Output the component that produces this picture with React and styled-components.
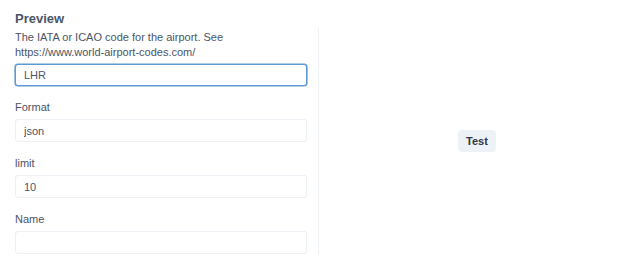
import React from 'react';
import styled, { createGlobalStyle } from 'styled-components';

const GlobalStyle = createGlobalStyle`
  html, body {
    margin: 0;
    padding: 0;
    background: #ffffff;
  }
  body {
    font-family: "Liberation Sans", Arial, sans-serif;
    -webkit-font-smoothing: antialiased;
  }
`;

const Page = styled.div`
  width: 635px;
  height: 258px;
  padding: 9px 0 0 15px;
  box-sizing: border-box;
  display: flex;
  flex-direction: column;
`;

const Heading = styled.h2`
  margin: 0;
  font-size: 13px;
  line-height: 19px;
  font-weight: 700;
  color: #4a5568;
`;

const Body = styled.div`
  display: flex;
  height: 226px;
`;

const FormColumn = styled.div`
  width: 292px;
  margin-right: 11px;
  display: flex;
  flex-direction: column;
`;

const Description = styled.p`
  margin: 0 0 4px;
  padding-top: 2px;
  font-size: 11px;
  line-height: 15px;
  color: #4a5568;
`;

const Url = styled.span`
  white-space: nowrap;
`;

const Field = styled.div`
  display: flex;
  flex-direction: column;
  margin-top: 14px;
`;

const Label = styled.label`
  font-size: 11px;
  line-height: 15px;
  color: #4a5568;
  margin-bottom: 4px;
`;

const Input = styled.input`
  box-sizing: border-box;
  width: 100%;
  height: 23px;
  padding: 0 8px;
  font-family: inherit;
  font-size: 11px;
  color: #4a5568;
  background: #ffffff;
  border: 1px solid ${({ focused }) => (focused ? '#5c98d6' : '#edf0f4')};
  box-shadow: ${({ focused }) => (focused ? '0 0 0 0.6px #5c98d6' : 'none')};
  border-radius: 3px;
  outline: none;
`;

const PreviewPane = styled.div`
  flex: 1;
  border-left: 1px solid #eef1f4;
  display: flex;
  align-items: center;
  justify-content: center;
`;

const TestButton = styled.button`
  height: 22px;
  padding: 0 8px;
  border: none;
  border-radius: 4px;
  background: #edf2f7;
  color: #2d3748;
  font-family: inherit;
  font-size: 11px;
  font-weight: 700;
  cursor: pointer;
`;

const fields = [
  { label: 'Format', value: 'json' },
  { label: 'limit', value: '10' },
  { label: 'Name', value: '' },
];

export default function App() {
  return (
    <>
      <GlobalStyle />
      <Page>
        <Heading>Preview</Heading>
        <Body>
          <FormColumn>
            <Description>
              The IATA or ICAO code for the airport. See <Url>https://www.world-airport-codes.com/</Url>
            </Description>
            <Input focused defaultValue="LHR" autoFocus />
            {fields.map((f) => (
              <Field key={f.label}>
                <Label>{f.label}</Label>
                <Input defaultValue={f.value} />
              </Field>
            ))}
          </FormColumn>
          <PreviewPane>
            <TestButton>Test</TestButton>
          </PreviewPane>
        </Body>
      </Page>
    </>
  );
}
